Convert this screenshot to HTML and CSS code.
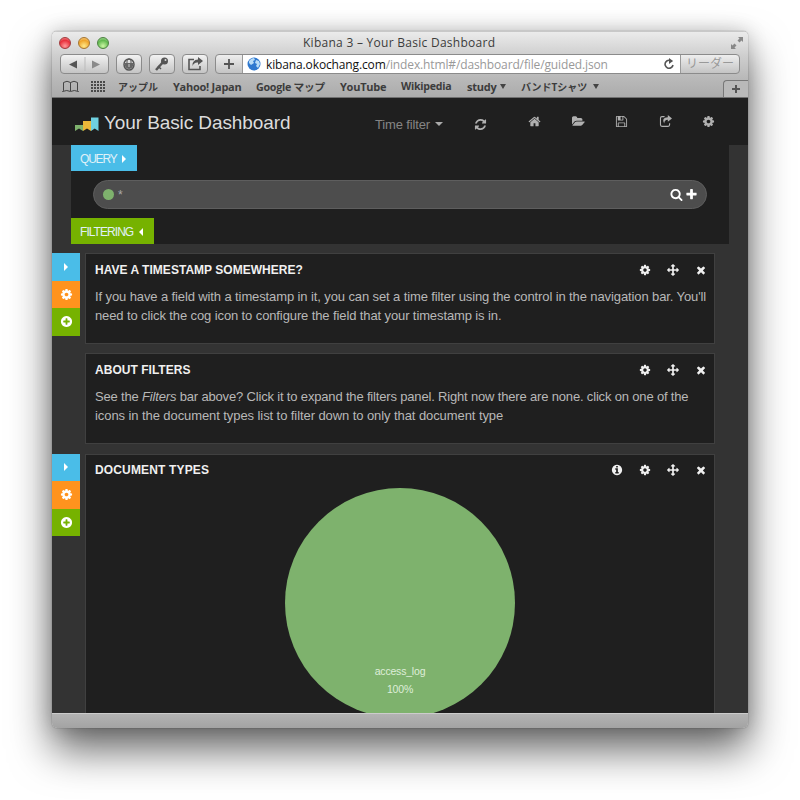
FILE: index.html
```html
<!DOCTYPE html>
<html lang="ja">
<head>
	<meta charset="utf-8">
	<title>Kibana 3 – Your Basic Dashboard</title>
	<link rel="stylesheet" href="styles.css">
</head>

<body>
	<svg class="defs">
		<symbol id="cog" viewBox="0 0 1792 1792"><path d="M1152 896q0-106-75-181t-181-75-181 75-75 181 75 181 181 75 181-75 75-181zm512-109v222q0 12-8 23t-20 13l-185 28q-19 54-39 91 35 50 107 138 10 12 10 25t-9 23q-27 37-99 108t-94 71q-12 0-26-9l-138-108q-44 23-91 38-16 136-29 186-7 28-36 28h-222q-14 0-24.500-8.500t-11.500-21.500l-28-184q-49-16-90-37l-141 107q-10 9-25 9-14 0-25-11-126-114-165-168-7-10-7-23 0-12 8-23 15-21 51-66.500t54-70.500q-27-50-41-99l-183-27q-13-2-21-12.500t-8-23.500v-222q0-12 8-23t19-13l186-28q14-46 39-92-40-57-107-138-10-12-10-24 0-10 9-23 26-36 98.500-107.500t94.500-71.500q13 0 26 10l138 107q44-23 91-38 16-136 29-186 7-28 36-28h222q14 0 24.500 8.500t11.500 21.500l28 184q49 16 90 37l142-107q9-9 24-9 13 0 25 10 129 119 165 170 7 8 7 22 0 12-8 23-15 21-51 66.500t-54 70.500q26 50 41 98l183 28q13 2 21 12.500t8 23.500z"/></symbol>
		<symbol id="refresh" viewBox="0 0 1792 1792"><path d="M1639 1056q0 5-1 7-64 268-268 434.500t-478 166.500q-146 0-282.500-55t-243.500-157l-129 129q-19 19-45 19t-45-19-19-45v-448q0-26 19-45t45-19h448q26 0 45 19t19 45-19 45l-137 137q71 66 161 102t187 36q134 0 250-65t186-179q11-17 53-117 8-23 30-23h192q13 0 22.500 9.500t9.500 22.500zm25-800v448q0 26-19 45t-45 19h-448q-26 0-45-19t-19-45 19-45l138-138q-148-137-349-137-134 0-250 65t-186 179q-11 17-53 117-8 23-30 23h-199q-13 0-22.500-9.500t-9.500-22.500v-7q65-268 270-434.500t480-166.500q146 0 284 55.500t245 156.500l130-129q19-19 45-19t45 19 19 45z"/></symbol>
		<symbol id="home" viewBox="0 0 1792 1792"><path d="M1472 992v480q0 26-19 45t-45 19h-384v-384h-256v384h-384q-26 0-45-19t-19-45v-480q0-1 .5-3t.5-3l575-474 575 474q1 2 1 6zm223-69l-62 74q-8 9-21 11h-3q-13 0-21-7l-692-577-692 577q-12 8-24 7-13-2-21-11l-62-74q-8-10-7-23.500t11-21.500l719-599q32-26 76-26t76 26l244 204v-195q0-14 9-23t23-9h192q14 0 23 9t9 23v408l219 182q10 8 11 21.500t-7 23.500z"/></symbol>
		<symbol id="folder" viewBox="0 0 1920 1792"><path d="M1879 952q0 31-31 66l-336 396q-43 51-120.500 86.500t-143.500 35.500h-1088q-34 0-60.500-13t-26.500-43q0-31 31-66l336-396q43-51 120.500-86.500t143.500-35.500h1088q34 0 60.500 13t26.500 43zm-343-344v160h-832q-94 0-197 47.500t-164 119.500l-337 396-5 6q0-4-.5-12.500t-.5-12.500v-960q0-92 66-158t158-66h320q92 0 158 66t66 158v32h544q92 0 158 66t66 158z"/></symbol>
		<symbol id="save" viewBox="0 0 1792 1792"><path d="M512 1536h768v-384h-768v384zm896 0h128v-896q0-14-10-38.500t-20-34.500l-281-281q-10-10-34-20t-39-10v416q0 40-28 68t-68 28h-576q-40 0-68-28t-28-68v-416h-128v1280h128v-416q0-40 28-68t68-28h832q40 0 68 28t28 68v416zm-384-928v-320q0-13-9.500-22.500t-22.500-9.500h-192q-13 0-22.500 9.500t-9.500 22.500v320q0 13 9.500 22.500t22.500 9.500h192q13 0 22.500-9.500t9.500-22.500zm640 32v928q0 40-28 68t-68 28h-1344q-40 0-68-28t-28-68v-1344q0-40 28-68t68-28h928q40 0 88 20t76 48l280 280q28 28 48 76t20 88z"/></symbol>
		<symbol id="share" viewBox="0 0 14 14"><path d="M6 1.800H3.200Q1.600 1.800 1.600 3.400V10.600Q1.600 12.200 3.200 12.200H9.800Q11.400 12.200 11.400 10.600V9" fill="none" stroke="currentColor" stroke-width="1.200"/><path d="M9.500 0L14 3.700 9.500 7.400V5.200Q6 5 5.600 9.200 2.200 2.600 9.500 2.300Z"/></symbol>
		<symbol id="times" viewBox="0 0 1792 1792"><path d="M1490 1322q0 40-28 68l-136 136q-28 28-68 28t-68-28l-294-294-294 294q-28 28-68 28t-68-28l-136-136q-28-28-28-68t28-68l294-294-294-294q-28-28-28-68t28-68l136-136q28-28 68-28t68 28l294 294 294-294q28-28 68-28t68 28l136 136q28 28 28 68t-28 68l-294 294 294 294q28 28 28 68z"/></symbol>
		<symbol id="move" viewBox="0 0 1792 1792"><path d="M1792 896q0 26-19 45l-256 256q-19 19-45 19t-45-19-19-45v-128h-384v384h128q26 0 45 19t19 45-19 45l-256 256q-19 19-45 19t-45-19l-256-256q-19-19-19-45t19-45 45-19h128v-384h-384v128q0 26-19 45t-45 19-45-19l-256-256q-19-19-19-45t19-45l256-256q19-19 45-19t45 19 19 45v128h384v-384h-128q-26 0-45-19t-19-45 19-45l256-256q19-19 45-19t45 19l256 256q19 19 19 45t-19 45-45 19h-128v384h384v-128q0-26 19-45t45-19 45 19l256 256q19 19 19 45z"/></symbol>
		<symbol id="add" viewBox="0 0 1792 1792"><path d="M1344 960v-128q0-26-19-45t-45-19h-256v-256q0-26-19-45t-45-19h-128q-26 0-45 19t-19 45v256h-256q-26 0-45 19t-19 45v128q0 26 19 45t45 19h256v256q0 26 19 45t45 19h128q26 0 45-19t19-45v-256h256q26 0 45-19t19-45zm320-64q0 209-103 385.500t-279.500 279.500-385.500 103-385.500-103-279.500-279.500-103-385.500 103-385.500 279.500-279.500 385.500-103 385.500 103 279.500 279.500 103 385.500z"/></symbol>
		<symbol id="info" viewBox="0 0 1792 1792"><path d="M1152 1376v-160q0-14-9-23t-23-9h-96v-512q0-14-9-23t-23-9h-320q-14 0-23 9t-9 23v160q0 14 9 23t23 9h96v320h-96q-14 0-23 9t-9 23v160q0 14 9 23t23 9h448q14 0 23-9t9-23zm-128-896v-160q0-14-9-23t-23-9h-192q-14 0-23 9t-9 23v160q0 14 9 23t23 9h192q14 0 23-9t9-23zm640 416q0 209-103 385.500t-279.500 279.500-385.500 103-385.500-103-279.500-279.500-103-385.500 103-385.500 279.500-279.500 385.500-103 385.500 103 279.500 279.500 103 385.500z"/></symbol>
		<symbol id="search" viewBox="0 0 1792 1792"><path d="M1216 832q0-185-131.500-316.500t-316.500-131.500-316.500 131.500-131.500 316.500 131.500 316.500 316.500 131.500 316.500-131.500 131.500-316.500zm512 832q0 52-38 90t-90 38q-54 0-90-38l-343-342q-179 124-399 124-143 0-273.500-55.500t-225-150-150-225-55.500-273.500 55.500-273.500 150-225 225-150 273.500-55.500 273.500 55.500 225 150 150 225 55.500 273.500q0 220-124 399l343 343q37 37 37 90z"/></symbol>
		<symbol id="plus" viewBox="0 0 1792 1792"><path d="M1600 736v192q0 40-28 68t-68 28h-416v416q0 40-28 68t-68 28h-192q-40 0-68-28t-28-68v-416h-416q-40 0-68-28t-28-68v-192q0-40 28-68t68-28h416v-416q0-40 28-68t68-28h192q40 0 68 28t28 68v416h416q40 0 68 28t28 68z"/></symbol>
	</svg>

	<div class="window">
		<header class="chrome">
			<div class="titlebar">
				<div class="lights"><i class="red"></i><i class="yellow"></i><i class="green"></i></div>
				<div class="window-title">Kibana 3 – Your Basic Dashboard</div>
				<svg class="fullscreen" width="14" height="14" viewBox="0 0 14 14"><path d="M8 1h5v5l-1.500-1.500-2 2-2-2 2-2zM1 8l1.500 1.500 2-2 2 2-2 2L6 13H1z" fill="#888"/></svg>
			</div>
			<div class="toolbar">
				<div class="btn nav-btn">
					<svg width="48" height="18" viewBox="0 0 48 18"><path d="M8 9.500l8-4v8z" fill="#555"/><path d="M39 9.500l-8-4v8z" fill="#8a8a8a"/><path d="M24 2v14" stroke="#bbb"/></svg>
				</div>
				<div class="btn">
					<svg width="24" height="18" viewBox="0 0 24 18"><ellipse cx="12" cy="9.500" rx="5" ry="5.500" fill="none" stroke="#555" stroke-width="1.500"/><path d="M10 8V6q0-2 2-2t2 2v2" fill="none" stroke="#555"/><path d="M8 8h8v3q-1 3-4 3t-4-3z" fill="#666"/><path d="M12 9v3" stroke="#ccc"/></svg>
				</div>
				<div class="btn">
					<svg width="24" height="18" viewBox="0 0 24 18"><path d="M14 6L6 15" stroke="#555" stroke-width="2.500"/><path d="M8 11l3 3" stroke="#555" stroke-width="1.500"/><circle cx="14.500" cy="6" r="3.500" fill="#555"/><circle cx="15.500" cy="5" r="1" fill="#ddd"/></svg>
				</div>
				<div class="btn">
					<svg width="24" height="18" viewBox="0 0 24 18"><path d="M11 4.500H6v10h11V11" fill="none" stroke="#555" stroke-width="1.600"/><path d="M15 2l5 4-5 4V7.500q-4-.5-5.500 3.500Q9 5 15 4.500z" fill="#555"/></svg>
				</div>
				<div class="address">
					<div class="add-page"><svg width="10" height="10"><path d="M5 0v10M0 5h10" stroke="#555" stroke-width="1.800"/></svg></div>
					<div class="url">
						<svg class="globe" width="14" height="14" viewBox="0 0 14 14"><circle cx="7" cy="7" r="6.500" fill="#2f78cf"/><path d="M2 4q2-3 5-3l1 2-2 1 1 2-3 2-2-2zM9 3l3 1 1 3-2 4-2-2 1-2-2-1z" fill="#b9dcf7"/></svg>
						<span class="url-text"><b>kibana.okochang.com</b>/index.html#/dashboard/file/guided.json</span>
						<svg class="reload" width="10" height="12" viewBox="0 0 10 12"><path d="M8 3.500A4 4 0 1 0 9 7" fill="none" stroke="#555" stroke-width="1.600"/><path d="M5 0l4 3-4 3z" fill="#555"/></svg>
					</div>
					<div class="reader">リーダー</div>
				</div>
			</div>
			<div class="bookmarks">
				<svg width="17" height="13" viewBox="0 0 17 13"><path d="M8.500 2.500Q5 0 1.500 2.500V10.500Q1.500 11 .5 11.500Q5 9.500 8.500 11.500 12 9.500 16.500 11.500 15.500 11 15.500 10.500V2.500Q12 0 8.500 2.500V11" fill="none" stroke="#444"/></svg>
				<svg width="14" height="11"><path d="M0 1h14M0 4h14M0 7h14M0 10h14" stroke="#4a4a4a" stroke-width="2" stroke-dasharray="2 1"/></svg>
				<span class="w41">アップル</span>
				<span class="w68">Yahoo! Japan</span>
				<span class="w70">Google マップ</span>
				<span class="w46">YouTube</span>
				<span class="w51">Wikipedia</span>
				<span class="w30">study</span><i class="down"></i>
				<span class="w67">バンドTシャツ</span><i class="down"></i>
				<div class="new-tab"><svg width="8" height="8"><path d="M4 0v8M0 4h8" stroke="#555" stroke-width="2"/></svg></div>
			</div>
		</header>

		<div class="page">
			<nav class="navbar">
				<svg class="logo" width="24" height="15" viewBox="0 0 24 15"><path d="M0 8h8v6l-4-2.500L0 14z" fill="#7eb26d"/><path d="M8 4h8v10l-4-2.500L8 14z" fill="#eab839"/><path d="M16 .5h7.500V14l-3.750-2.500L16 14z" fill="#6ed0e0"/></svg>
				<h1>Your Basic Dashboard</h1>
				<span class="time-filter">Time filter</span><i class="caret"></i>
				<svg class="icon refresh"><use href="#refresh"/></svg>
				<div class="nav-icons">
					<svg class="icon"><use href="#home"/></svg>
					<svg class="icon"><use href="#folder"/></svg>
					<svg class="icon"><use href="#save"/></svg>
					<svg class="icon"><use href="#share"/></svg>
					<svg class="icon"><use href="#cog"/></svg>
				</div>
			</nav>

			<section class="controls">
				<div class="tag query"><span>QUERY</span><i class="right"></i></div>
				<div class="search">
					<i class="dot"></i><span>*</span>
					<svg class="icon"><use href="#search"/></svg>
					<svg class="icon"><use href="#plus"/></svg>
				</div>
				<div class="tag filtering"><span>FILTERING</span><i class="left"></i></div>
			</section>

			<section class="row">
				<div class="side">
					<div class="blue"><i class="right"></i></div>
					<div class="orange"><svg class="icon"><use href="#cog"/></svg></div>
					<div class="lime"><svg class="icon"><use href="#add"/></svg></div>
				</div>
				<div class="panels">
					<article class="panel">
						<div class="panel-head">
							<h2>HAVE A TIMESTAMP SOMEWHERE?</h2>
							<svg class="icon"><use href="#cog"/></svg>
							<svg class="icon"><use href="#move"/></svg>
							<svg class="icon"><use href="#times"/></svg>
						</div>
						<p><span>If you have a field with a timestamp in it, you can set a time filter using the control in the navigation bar. You'll</span><br><span>need to click the cog icon to configure the field that your timestamp is in.</span></p>
					</article>
					<article class="panel">
						<div class="panel-head">
							<h2>ABOUT FILTERS</h2>
							<svg class="icon"><use href="#cog"/></svg>
							<svg class="icon"><use href="#move"/></svg>
							<svg class="icon"><use href="#times"/></svg>
						</div>
						<p><span class="tight">See the <em>Filters</em> bar above? Click it to expand the filters panel. Right now there are none. click on one of the</span><br><span class="loose">icons in the document types list to filter down to only that document type</span></p>
					</article>
				</div>
			</section>

			<section class="row">
				<div class="side">
					<div class="blue"><i class="right"></i></div>
					<div class="orange"><svg class="icon"><use href="#cog"/></svg></div>
					<div class="lime"><svg class="icon"><use href="#add"/></svg></div>
				</div>
				<div class="panels">
					<article class="panel chart-panel">
						<div class="panel-head">
							<h2 class="chart-title">DOCUMENT TYPES</h2>
							<svg class="icon"><use href="#info"/></svg>
							<svg class="icon"><use href="#cog"/></svg>
							<svg class="icon"><use href="#move"/></svg>
							<svg class="icon"><use href="#times"/></svg>
						</div>
						<div class="pie"><span>access_log</span><span>100%</span></div>
					</article>
				</div>
			</section>
		</div>
		<footer class="status"></footer>
	</div>
</body>
</html>
```
FILE: styles.css
```css
*{
	box-sizing: border-box;
	margin: 0;
	padding: 0;
}
body{
	width: 800px;
	height: 800px;
	overflow: hidden;
	background: #fff;
	padding: 31px 52px 0;
	font-family: "Liberation Sans", Arial, sans-serif;
}
i{
	font-style: normal;
	flex: none;
}
svg{
	flex: none;
	display: block;
}
span{
	white-space: nowrap;
}
.defs{
	display: none;
}
.icon{
	width: 13px;
	height: 13px;
	fill: currentColor;
}
.window{
	width: 696px;
	height: 697px;
	border-radius: 5px;
	box-shadow: 0 22px 42px rgba(0,0,0,0.6), 0 0 20px rgba(0,0,0,0.18), 0 0 1px #555;
	overflow: hidden;
	display: flex;
	flex-direction: column;
}

/* browser chrome */
.chrome{
	height: 67px;
	background: linear-gradient(#ebebeb, #cfcfcf 23px, #b9b9b9 46px, #acacac 64px);
	border-top: 1px solid #c8c8c8;
	border-bottom: 1px solid #707070;
	font-family: "Open Sans", "Noto Sans CJK JP", sans-serif;
	color: #3c3c3c;
}
.titlebar{
	height: 22px;
	display: flex;
	align-items: center;
	padding: 0 4px 1px 7px;
}
.lights{
	display: flex;
	gap: 7px;
	width: 244px;
}
.lights i{
	width: 12px;
	height: 12px;
	border-radius: 50%;
	border: 1px solid;
}
.lights .red{
	background: radial-gradient(circle at 50% 80%, #ff9c9c, #e8303b 60%, #f2a0a0);
	border-color: #a23a3c;
}
.lights .yellow{
	background: radial-gradient(circle at 50% 80%, #ffe98a, #efa52b 60%, #f7d49a);
	border-color: #a5752f;
}
.lights .green{
	background: radial-gradient(circle at 50% 80%, #cdf7a5, #62b94f 60%, #b5e0a8);
	border-color: #4c8240;
}
.window-title{
	flex: 1;
	font-size: 12px;
	letter-spacing: 0.27px;
	white-space: nowrap;
}
.toolbar{
	height: 22px;
	display: flex;
	padding: 0 8px;
	gap: 7px;
}
.btn{
	width: 26px;
	height: 20px;
	border: 1px solid #8b8b8b;
	border-radius: 4px;
	background: linear-gradient(#f2f2f2, #c4c4c4);
}
.nav-btn{
	width: 49px;
}
.address{
	flex: 1;
	height: 20px;
	display: flex;
	border: 1px solid #8b8b8b;
	border-radius: 4px;
	overflow: hidden;
	background: linear-gradient(#eee, #c4c4c4);
}
.add-page{
	width: 27px;
	border-right: 1px solid #999;
	display: flex;
	align-items: center;
	justify-content: center;
}
.url{
	flex: 1;
	display: flex;
	align-items: center;
	background: #fff;
	padding: 0 6px 0 4px;
	border-right: 1px solid #999;
}
.url-text{
	flex: 1;
	margin-left: 5px;
	padding-top: 1px;
	font-size: 12px;
	line-height: 18px;
	letter-spacing: -0.13px;
	color: #999;
}
.url-text b{
	font-weight: 400;
	color: #111;
}
.reader{
	width: 58px;
	text-align: center;
	font-size: 12px;
	line-height: 18px;
	color: #999;
}
.bookmarks{
	height: 21px;
	display: flex;
	align-items: center;
	padding: 0 0 1px 10px;
	font-size: 11px;
	font-weight: 700;
	letter-spacing: -0.25px;
}
.bookmarks svg{
	margin-right: 12px;
}
.bookmarks span{
	margin-right: 15px;
}
.bookmarks .w41{ width: 42px; font-size: 10px; letter-spacing: 0; margin-left: 1px; margin-right: 13px; }
.bookmarks .w68{ width: 68px; }
.bookmarks .w70{ width: 70px; font-size: 10.7px; margin-right: 14px; }
.bookmarks .w46{ width: 46px; }
.bookmarks .w51{ width: 51px; font-size: 10.6px; }
.bookmarks .w30{ width: 30px; margin-right: 3px; }
.bookmarks .w67{ width: 67px; margin-right: 5px; font-size: 10px; letter-spacing: 0; }
.down{
	border: 3.5px solid transparent;
	border-top: 5px solid #444;
	border-bottom: 0;
	margin-right: 15px;
}
.new-tab{
	margin: 0 0 -1px auto;
	align-self: flex-end;
	width: 25px;
	height: 17px;
	border: 1px solid #777;
	border-width: 1px 0 0 1px;
	border-radius: 4px 0 0 0;
	background: #b9b9b9;
	display: flex;
	align-items: center;
	justify-content: center;
}
.new-tab svg{
	margin: 0;
}

/* dashboard */
.page{
	height: 615px;
	overflow: hidden;
	background: #333;
	color: #c8c8c8;
}
.navbar{
	height: 47px;
	background: #1f1f1f;
	display: flex;
	align-items: center;
	padding: 0 33px 0 23px;
}
.logo{
	margin-top: 5px;
}
.navbar h1{
	width: 195px;
	margin-left: 5px;
	padding-top: 2px;
	font-size: 19px;
	font-weight: 400;
	letter-spacing: -0.1px;
	white-space: nowrap;
	color: #dcdcdc;
}
.time-filter{
	width: 55px;
	margin: 5px 5px 0 76px;
	font-size: 13px;
	letter-spacing: -0.15px;
	color: #858585;
}
.caret{
	margin-top: 5px;
	border: 4px solid transparent;
	border-top-color: #aaa;
	border-bottom: 0;
}
.refresh{
	margin: 5px 0 0 31px;
	color: #b0b0b0;
}
.nav-icons{
	margin-left: auto;
	display: flex;
	gap: 30.4px;
	color: #b0b0b0;
}
.controls{
	width: 658px;
	height: 99px;
	margin-left: 19px;
	background: #1f1f1f;
}
.tag{
	height: 26px;
	display: flex;
	align-items: center;
	padding: 1px 0 0 9px;
	font-size: 12px;
	color: #e0f1f8;
}
.query{
	width: 66px;
	background: #4abde8;
	letter-spacing: -1.2px;
}
.filtering{
	width: 83px;
	background: #76b200;
	letter-spacing: -0.95px;
}
.tag span{
	margin-right: 6px;
}
.right, .left{
	border: 4px solid transparent;
	border-left-color: #fff;
	border-right: 0;
}
.left{
	border-left: 0;
	border-right: 4px solid #fff;
}
.search{
	width: 614px;
	height: 29px;
	margin: 9px 0 9px 22px;
	border: 1px solid #5e5e5e;
	border-radius: 15px;
	background: #4d4d4d;
	display: flex;
	align-items: center;
	padding: 0 8px 0 9px;
	color: #fff;
}
.search span{
	flex: 1;
	margin-left: 4px;
	font-size: 12px;
	color: #aaa;
}
.search .icon + .icon{
	margin-left: 2px;
}
.dot{
	width: 11px;
	height: 11px;
	border-radius: 50%;
	background: #7eb26d;
}
.row{
	display: flex;
	margin-top: 9px;
	margin-bottom: 9.5px;
}
.side{
	width: 28px;
	margin-right: 5px;
	color: #fff;
}
.side div{
	height: 27.6px;
	display: flex;
	align-items: center;
	justify-content: center;
}
.side .blue{ background: #4abde8; }
.side .orange{ background: #ff931e; }
.side .lime{ background: #76b200; }
.panels{
	width: 630px;
	display: flex;
	flex-direction: column;
	gap: 9px;
}
.panel{
	height: 91px;
	border: 1px solid #404040;
	background: #1f1f1f;
	padding: 7px 7px 0 9px;
}
.chart-panel{
	height: 280px;
}
.panel-head{
	height: 17px;
	display: flex;
	align-items: center;
	color: #f0f0f0;
}
.panel-head h2{
	flex: 1;
	font-size: 12px;
	font-weight: 700;
	letter-spacing: 0.03px;
	white-space: nowrap;
}
.panel-head .chart-title{
	letter-spacing: 0.15px;
}
.panel-head .icon{
	width: 12px;
	height: 12px;
	margin-left: 16px;
}
.panel p{
	margin-top: 10px;
	font-size: 13px;
	line-height: 18.5px;
	letter-spacing: -0.11px;
	color: #b8b8b8;
}
.panel .tight{
	letter-spacing: -0.17px;
}
.panel .loose{
	letter-spacing: -0.08px;
}
.pie{
	width: 230px;
	height: 230px;
	margin: 9px auto 0 190px;
	border-radius: 50%;
	background: #7eb26d;
	display: flex;
	flex-direction: column;
	align-items: center;
	padding-top: 174px;
	font-size: 10.5px;
	line-height: 18px;
	letter-spacing: -0.2px;
	color: #dfeeda;
}
.status{
	height: 15px;
	background: linear-gradient(#b3b3b3, #a3a3a3);
	border-top: 1px solid #ccc;
}
```
